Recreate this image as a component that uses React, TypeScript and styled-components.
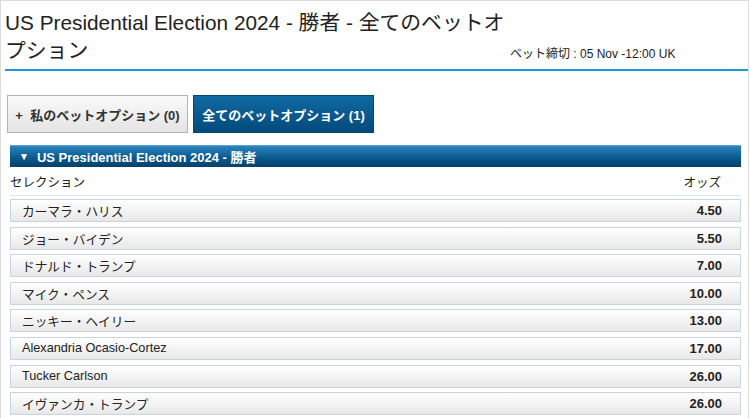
import styled, { createGlobalStyle } from 'styled-components';

const GlobalStyle = createGlobalStyle`
  html, body {
    margin: 0;
    padding: 0;
    background: #fff;
  }
  body {
    font-family: "Liberation Sans", Arial, "Noto Sans CJK JP", sans-serif;
    color: #222;
  }
`;

interface Selection {
  name: string;
  odds: string;
}

const selections: Selection[] = [
  { name: 'カーマラ・ハリス', odds: '4.50' },
  { name: 'ジョー・バイデン', odds: '5.50' },
  { name: 'ドナルド・トランプ', odds: '7.00' },
  { name: 'マイク・ペンス', odds: '10.00' },
  { name: 'ニッキー・ヘイリー', odds: '13.00' },
  { name: 'Alexandria Ocasio-Cortez', odds: '17.00' },
  { name: 'Tucker Carlson', odds: '26.00' },
  { name: 'イヴァンカ・トランプ', odds: '26.00' },
];

export default function App() {
  return (
    <>
      <GlobalStyle />
      <Frame>
        <Header>
          <Title>US Presidential Election 2024 - 勝者 - 全てのベットオプション</Title>
          <Deadline>ベット締切 : 05 Nov -12:00 UK</Deadline>
        </Header>

        <Tabs>
          <TabButton>+&nbsp; 私のベットオプション (0)</TabButton>
          <TabButton $active>全てのベットオプション (1)</TabButton>
        </Tabs>

        <Market>
          <MarketBar>
            <Caret>▼</Caret>
            US Presidential Election 2024 - 勝者
          </MarketBar>
          <ColumnHead>
            <span>セレクション</span>
            <span>オッズ</span>
          </ColumnHead>
          <RowList>
            {selections.map((s, i) => (
              <Row key={i}>
                <Name>{s.name}</Name>
                <Odds>{s.odds}</Odds>
              </Row>
            ))}
          </RowList>
        </Market>
      </Frame>
    </>
  );
}

// ------------ スタイル設定 ------------
const Frame = styled.div`
  box-sizing: border-box;
  width: 749px;
  height: 418px;
  border: 1px solid #dcdcdc;
  border-bottom: none;
  overflow: hidden;
`;

const Header = styled.div`
  display: flex;
  align-items: flex-end;
  margin-left: 4px;
  padding: 8px 0 4px;
  border-bottom: 2px solid #1c9ad6;
`;

const Title = styled.h1`
  flex: 0 0 505px;
  margin: 0;
  font-size: 20.8px;
  font-weight: normal;
  line-height: 28px;
  color: #222;
`;

const Deadline = styled.div`
  margin: 0 0 4px 0;
  font-size: 12px;
  color: #222;
`;

const Tabs = styled.div`
  display: flex;
  gap: 5px;
  padding: 24px 0 0 6px;
`;

const TabButton = styled.button<{ $active?: boolean }>`
  box-sizing: border-box;
  width: 181px;
  height: 38px;
  padding: 0;
  font-family: inherit;
  font-size: 13px;
  font-weight: bold;
  cursor: pointer;
  color: ${(p) => (p.$active ? '#fff' : '#333')};
  border: 1px solid ${(p) => (p.$active ? '#07466f' : '#b4b4b4')};
  background: ${(p) =>
    p.$active
      ? 'linear-gradient(#0f6aa2, #034a7c)'
      : 'linear-gradient(#fafafa, #e4e4e4)'};
`;

const Market = styled.div`
  margin: 12px 7px 0 9px;
`;

const MarketBar = styled.div`
  display: flex;
  align-items: center;
  height: 22px;
  padding-left: 9px;
  font-size: 13px;
  font-weight: bold;
  color: #fff;
  background: linear-gradient(#2b85be, #0a5a8f 55%, #054068);
  border-top: 1px solid #5aa3d3;
  box-sizing: border-box;
`;

const Caret = styled.span`
  font-size: 10px;
  margin-right: 8px;
`;

const ColumnHead = styled.div`
  display: flex;
  justify-content: space-between;
  align-items: center;
  height: 28px;
  padding: 0 20px 0 0;
  font-size: 12.5px;
  color: #222;
  border-bottom: 1px solid #dde5ee;
  margin-bottom: 3px;
`;

const RowList = styled.div`
  display: flex;
  flex-direction: column;
  gap: 4.6px;
`;

const Row = styled.div`
  box-sizing: border-box;
  display: flex;
  justify-content: space-between;
  align-items: center;
  height: 23px;
  padding: 0 18px 0 11px;
  border: 1px solid #c9d4e0;
  background: linear-gradient(#ffffff, #e8e8e8);
`;

const Name = styled.span`
  font-size: 12.7px;
  color: #222;
`;

const Odds = styled.span`
  font-size: 13px;
  font-weight: bold;
  color: #222;
`;
